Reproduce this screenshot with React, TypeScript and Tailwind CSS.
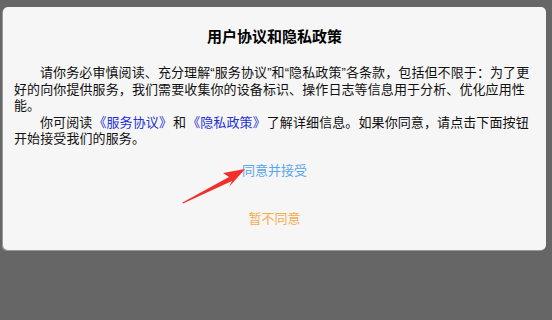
import React from 'react';

const PrivacyDialog: React.FC = () => {
  return (
    <div className="relative w-[552px] h-[320px] bg-[#666666] pt-[7px] px-[3px] overflow-hidden" style={{ fontFamily: '"Liberation Sans", "Noto Sans CJK SC", sans-serif' }}>
      <div className="w-[543px] h-[243px] bg-[#f6f6f6] rounded-[5px] shadow-[-1px_1px_0_#9a9a9a] px-[11px] pt-[20px] text-black">
        <h2 className="text-center text-[15px] font-bold leading-[20px]">用户协议和隐私政策</h2>
        <div className="mt-[18px] text-[13px] tracking-[0.1px] leading-[16.5px] text-[#111]">
          <p className="indent-[26px]">
            请你务必审慎阅读、充分理解“服务协议”和“隐私政策”各条款，包括但不限于：为了更好的向你提供服务，我们需要收集你的设备标识、操作日志等信息用于分析、优化应用性能。
          </p>
          <p className="indent-[26px]">
            你可阅读<span className="mx-[1px] text-[#2330d6]">《服务协议》</span>和<span className="mx-[1px] text-[#2330d6]">《隐私政策》</span>了解详细信息。如果你同意，请点击下面按钮开始接受我们的服务。
          </p>
        </div>
        <div className="flex flex-col items-center mt-[13px]">
          <button className="text-[13px] leading-[20px] text-[#5aa6ef]">同意并接受</button>
          <button className="mt-[28px] text-[13px] leading-[20px] text-[#f4ad4f]">暂不同意</button>
        </div>
      </div>
      <svg className="absolute left-0 top-0 pointer-events-none" width="552" height="320" viewBox="0 0 552 320">
        <polygon points="183,203.5 232,181 229,187 245,169 223,173 229,177 182.5,202.5" fill="#f0302a" />
      </svg>
    </div>
  );
};

export default function App() {
  return <PrivacyDialog />;
}
